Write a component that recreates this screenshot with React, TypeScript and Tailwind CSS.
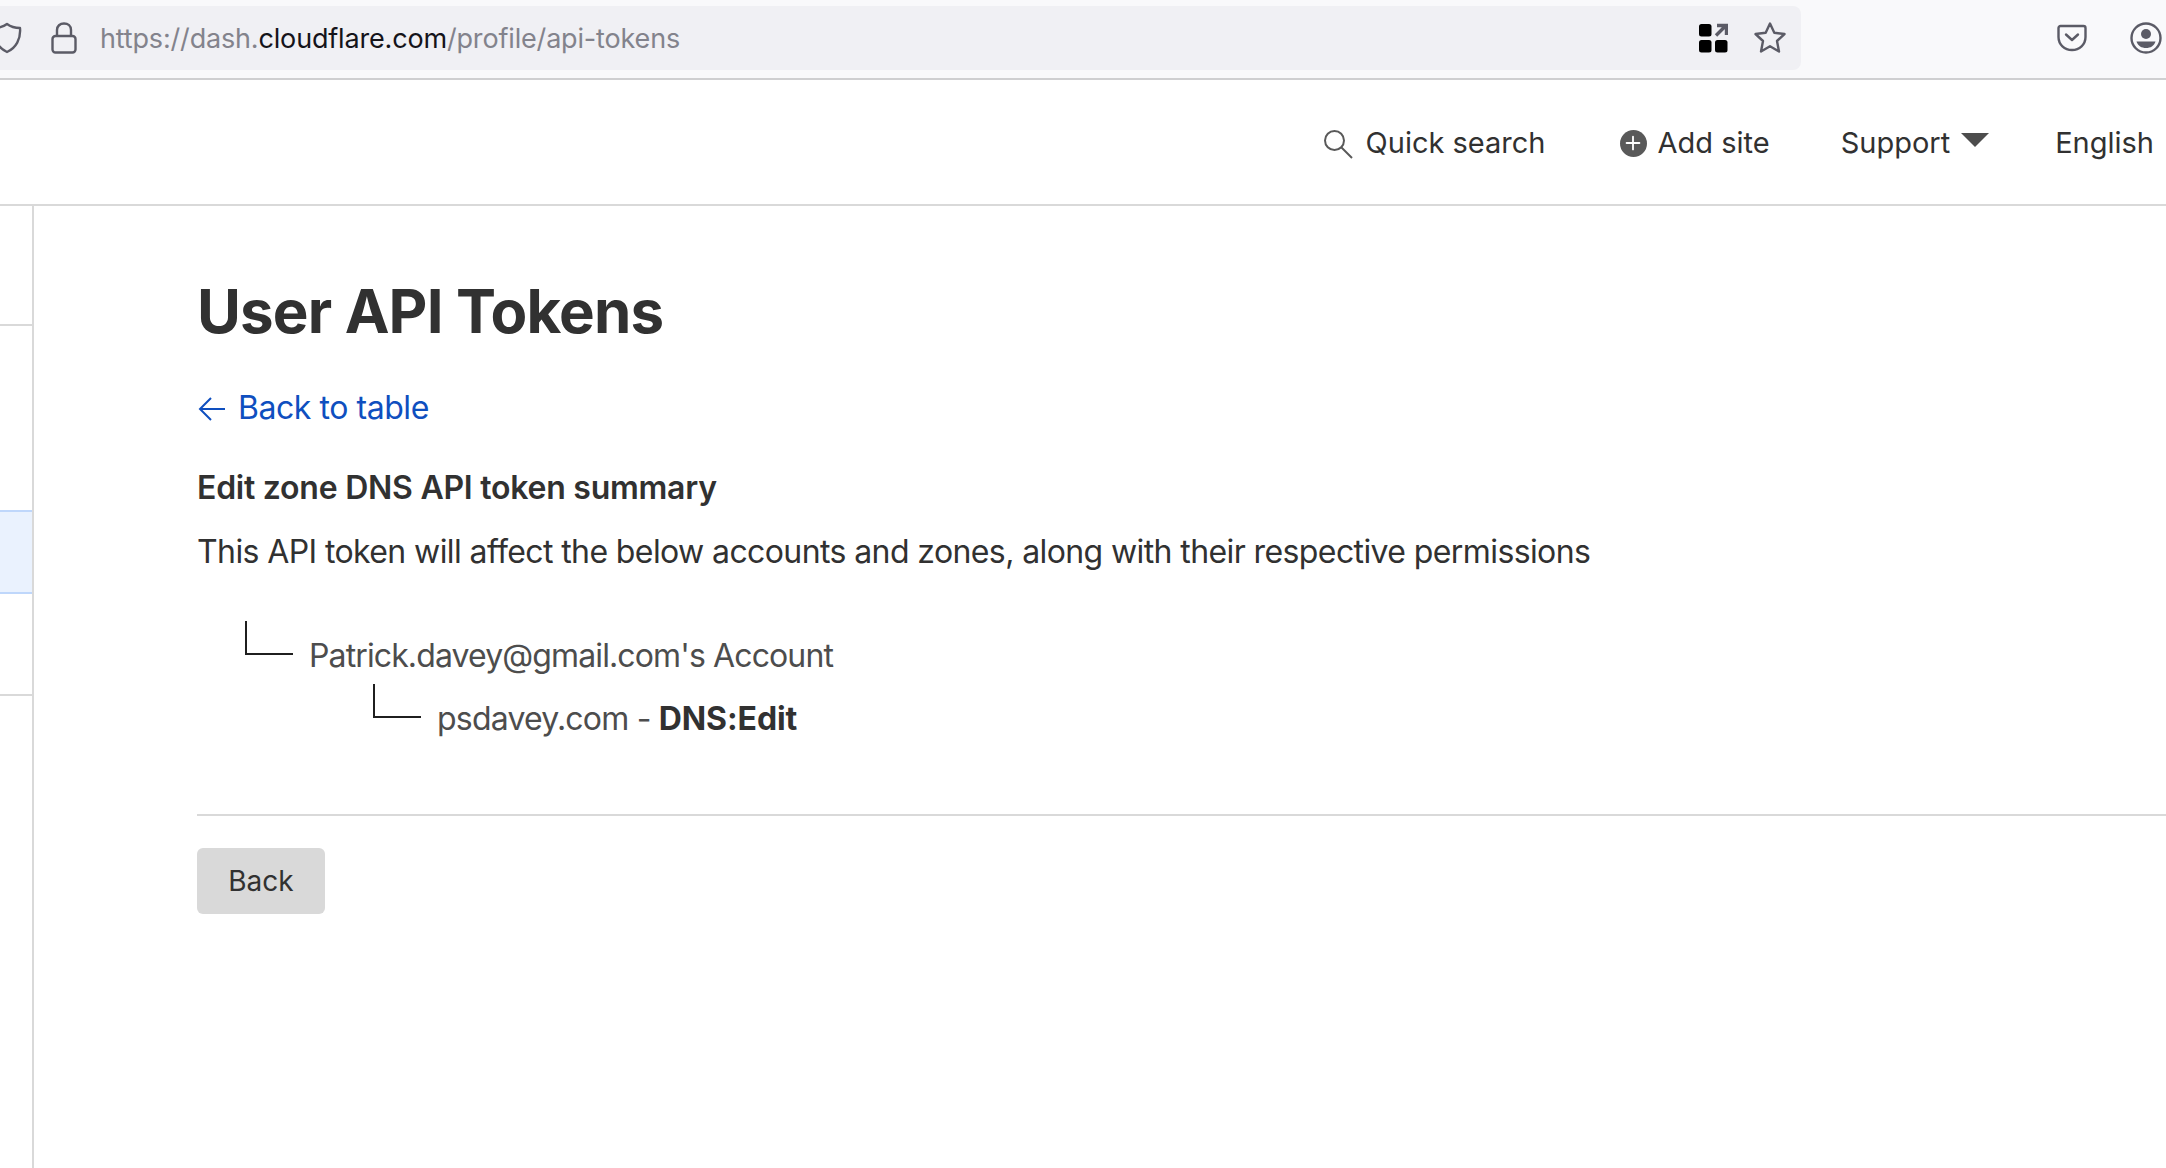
import { Plus } from "lucide-react"

function BrowserBar() {
  return (
    <div className="h-[80px] shrink-0 flex items-start pt-[6px] bg-[#f9f9fb] border-b-2 border-[#cfcfd1]">
      <div className="w-[1801px] h-[64px] shrink-0 flex items-center bg-[#f0f0f4] rounded-r-lg">
        {/* shield is clipped by the window edge */}
        <svg className="ml-[-9px] w-[32px] h-[32px] shrink-0" viewBox="0 0 32 32" fill="none" stroke="#5b5b66" strokeWidth="2.4">
          <path d="M16 2 C20 5 25 6 29 6 C30 17 25 26 16 30 C7 26 2 17 3 6 C7 6 12 5 16 2 Z" strokeLinejoin="round" />
        </svg>
        <svg className="ml-[28px] w-[26px] h-[32px] shrink-0" viewBox="0 0 26 32" fill="none" stroke="#5b5b66" strokeWidth="2.4">
          <path d="M6 14 V8 C6 4 9 1.500 13 1.500 C17 1.500 20 4 20 8 V14" />
          <rect x="1.500" y="14" width="23" height="16.500" rx="3" />
        </svg>
        <div className="ml-[23px] pt-[2px] text-[27px] tracking-[-0.17px] text-[#83838c] font-['Inter',sans-serif]">
          https://dash.<span className="text-[#15141a]">cloudflare.com</span>/profile/api-tokens
        </div>
        <div className="ml-auto flex items-center">
          <svg className="w-[30px] h-[30px]" viewBox="0 0 30 30">
            <rect x="1" y="1" width="12.500" height="12.500" rx="2.500" fill="#000" />
            <rect x="1" y="17" width="12.500" height="12.500" rx="2.500" fill="#000" />
            <rect x="17" y="17" width="12.500" height="12.500" rx="2.500" fill="#000" />
            <path d="M18 12.500 L27 3.500 M19 2.500 H28.500 V12" fill="none" stroke="#5b5b66" strokeWidth="3.400" />
          </svg>
          <svg className="ml-[25px] mr-[14px] w-[34px] h-[34px]" viewBox="0 0 34 34" fill="none" stroke="#5b5b66" strokeWidth="2.400" strokeLinejoin="round">
            <path d="M17 2.500 L21.300 11.700 L31.500 13 L24 20 L26 30.500 L17 25.300 L8 30.500 L10 20 L2.500 13 L12.700 11.700 Z" />
          </svg>
        </div>
      </div>
      <div className="ml-auto flex items-center h-[64px]">
        <svg className="w-[30px] h-[28px]" viewBox="0 0 30 28" fill="none" stroke="#5b5b66" strokeWidth="2.400" strokeLinejoin="round">
          <path d="M3.500 2 H26.500 C27.500 2 28.500 3 28.500 4 V13 C28.500 20.500 22.500 26 15 26 C7.500 26 1.500 20.500 1.500 13 V4 C1.500 3 2.500 2 3.500 2 Z" />
          <path d="M9 10.500 L15 16 L21 10.500" strokeLinecap="round" />
        </svg>
        <svg className="ml-[43px] mr-[4px] w-[32px] h-[32px]" viewBox="0 0 32 32">
          <circle cx="16" cy="16" r="14.500" fill="none" stroke="#5b5b66" strokeWidth="2.400" />
          <circle cx="16" cy="12" r="5" fill="#5b5b66" />
          <path d="M6.500 19.500 H25.500 C24 24 20.500 26 16 26 C11.500 26 8 24 6.500 19.500 Z" fill="#5b5b66" />
        </svg>
      </div>
    </div>
  )
}

function TopNav() {
  return (
    <div className="h-[126px] shrink-0 flex items-center justify-end border-b-2 border-[#d9d9d9] text-[29px] text-[#313131] pt-[2px]">
      <svg className="w-[30px] h-[30px] mt-[2px]" viewBox="0 0 30 30" fill="none" stroke="#595959" strokeWidth="2">
        <circle cx="11.500" cy="11.500" r="9.500" />
        <path d="M18.500 18.500 L29 29" />
      </svg>
      <span className="ml-[13px]">Quick search</span>
      <span className="ml-[74px] w-[27px] h-[27px] rounded-full bg-[#595959] flex items-center justify-center">
        <Plus className="w-[22px] h-[22px] text-white" strokeWidth={2} />
      </span>
      <span className="ml-[11px]">Add site</span>
      <span className="ml-[71px]">Support</span>
      <span className="ml-[11px] w-0 h-0 border-x-[14px] border-x-transparent border-t-[14px] border-t-[#4d4d4d] mb-[6px]" />
      <span className="ml-[66px] mr-[12px]">English</span>
    </div>
  )
}

function Sidebar() {
  return (
    <div className="w-[34px] shrink-0 flex flex-col border-r-2 border-[#d9d9d9]">
      <div className="h-[120px] border-b-2 border-[#d9d9d9]" />
      <div className="h-[184px]" />
      <div className="h-[84px] bg-[#eaf2fe] border-y-2 border-[#bfd7fb]" />
      <div className="h-[102px] border-b-2 border-[#d9d9d9]" />
    </div>
  )
}

function TreeRow({ indent, spacing, children }: { indent: string; spacing: string; children: React.ReactNode }) {
  return (
    <div className={`h-[46px] flex items-end ${indent}`}>
      <div className="w-[48px] h-[34px] shrink-0 border-l-2 border-b-2 border-[#1f1f1f] mb-[24px]" />
      <div className={`ml-[16px] text-[32px] leading-[46px] text-[#4d4d4d] ${spacing}`}>{children}</div>
    </div>
  )
}

export default function App() {
  return (
    <div className="w-[2166px] h-[1168px] overflow-hidden bg-white flex flex-col font-['Inter',sans-serif]">
      <BrowserBar />
      <TopNav />
      <div className="flex-1 flex min-h-0">
        <Sidebar />
        <div className="flex-1 pl-[163px] pt-[65px]">
          <h1 className="text-[60px] leading-[80px] font-bold text-[#313131] tracking-[-0.85px]">User API Tokens</h1>
          <a className="mt-[37px] flex items-center text-[32px] leading-[40px] tracking-[-0.45px] text-[#0f4fbf]">
            <svg className="w-[28px] h-[26px] ml-[1px] mr-[12px] mt-[2px]" viewBox="0 0 28 26" fill="none" stroke="#0f4fbf" strokeWidth="2">
              <path d="M27 13 H3 M13 2 L2 13 L13 24" />
            </svg>
            Back to table
          </a>
          <h2 className="mt-[40px] text-[32px] leading-[40px] font-semibold tracking-[-0.25px] text-[#313131]">Edit zone DNS API token summary</h2>
          <p className="mt-[24px] text-[32px] leading-[40px] tracking-[-0.6px] text-[#313131]">
            This API token will affect the below accounts and zones, along with their respective permissions
          </p>
          <div className="mt-[61px] flex flex-col gap-[17px]">
            <TreeRow indent="ml-[48px]" spacing="tracking-[-0.88px]">Patrick.davey@gmail.com's Account</TreeRow>
            <TreeRow indent="ml-[176px]" spacing="tracking-[-0.8px]">
              psdavey.com - <b className="font-bold tracking-[-0.1px] text-[#313131]">DNS:Edit</b>
            </TreeRow>
          </div>
          <div className="mt-[72px] border-t-2 border-[#d9d9d9]" />
          <button className="mt-[32px] w-[128px] h-[66px] rounded-md bg-[#d9d9d9] text-[28px] text-[#313131]">Back</button>
        </div>
      </div>
    </div>
  )
}
